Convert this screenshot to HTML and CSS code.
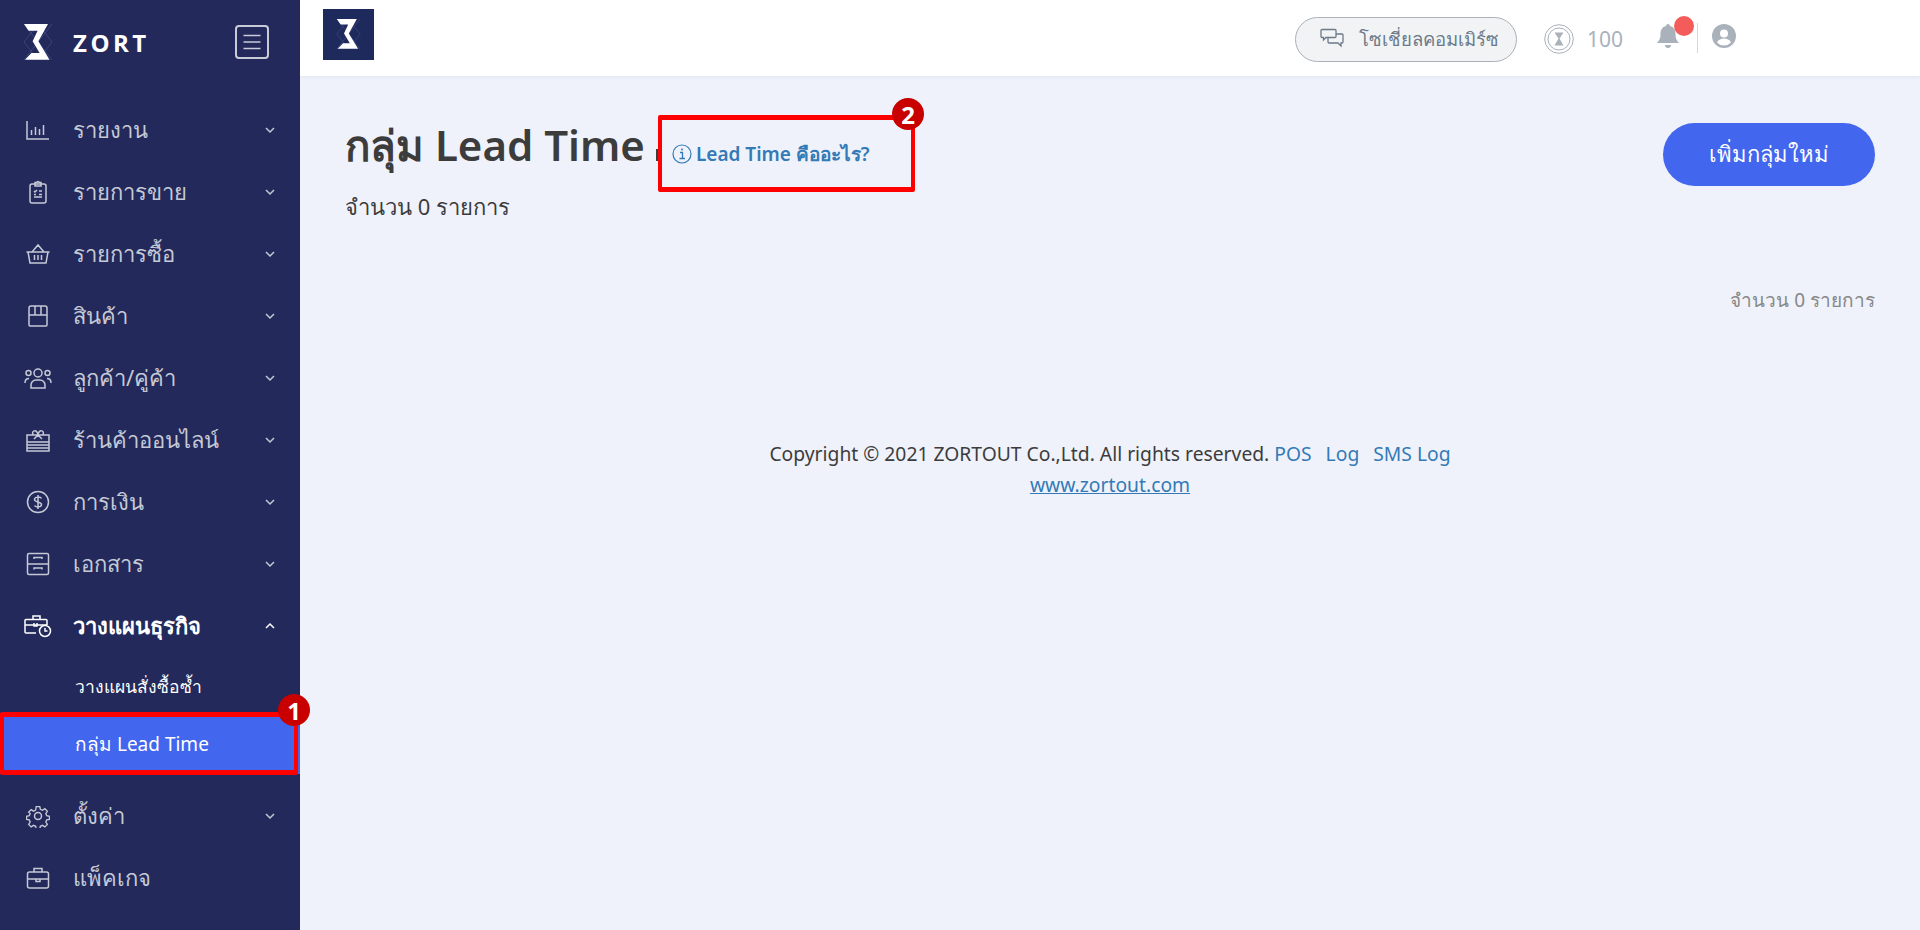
FILE: index.html
```html
<!DOCTYPE html>
<html lang="th">
<head>
<meta charset="utf-8">
<title>กลุ่ม Lead Time</title>
<link rel="stylesheet" href="styles.css">
</head>
<body>
<svg class="defs" width="0" height="0"><defs>
<symbol id="zlogo" viewBox="0 0 30 36">
<path d="M15 0 1 18l14 18M15 0l14 18-14 18M1 0l28 36M29 0 1 36" fill="none" stroke="#3f4a86" stroke-width=".8"/>
<path d="M1 0h24l-9.600 17.300L26.500 35.700H2L8.400 29h8.200L9.600 17.300 14.600 6.700h-9z" fill="#fff"/>
</symbol>
</defs></svg>
<div class="app">
<aside class="sidebar">
  <div class="brand">
    <svg class="brand-logo"><use href="#zlogo"/></svg>
    <span class="brand-name">ZORT</span>
    <span class="burger"><svg viewBox="0 0 34 34" width="34" height="34"><rect x="1" y="1" width="32" height="32" rx="3" fill="none" stroke="#c9ccd8" stroke-width="2"/><path d="M8.500 10.500h17M8.500 17h17M8.500 23.500h17" stroke="#c9ccd8" stroke-width="1.500"/></svg></span>
  </div>
  <nav class="menu">
    <a class="item"><svg class="ico" viewBox="0 0 24 24"><path d="M1 3v18h22M5.500 17v-5M9.500 17V9M13.500 17v-6M17.500 17V7"/></svg><span class="lbl">รายงาน</span><svg class="chev" viewBox="0 0 12 8"><path d="M2 2l4 4 4-4"/></svg></a>
    <a class="item"><svg class="ico" viewBox="0 0 24 24"><rect x="4" y="4" width="16" height="19" rx="2"/><path d="M9 4V2.500h2a1 1 0 0 1 2 0h2V6H9zM8 11l1 1 2-2M13 11h3M8 17h8M8 14.500h2M13 14.500h3"/></svg><span class="lbl">รายการขาย</span><svg class="chev" viewBox="0 0 12 8"><path d="M2 2l4 4 4-4"/></svg></a>
    <a class="item"><svg class="ico" viewBox="0 0 24 24"><path d="M0.500 10h23M2 10l2 11h16l2-11M6 10l6-7 6 7M8.500 13v5M12 13v5M15.500 13v5"/></svg><span class="lbl">รายการซื้อ</span><svg class="chev" viewBox="0 0 12 8"><path d="M2 2l4 4 4-4"/></svg></a>
    <a class="item"><svg class="ico" viewBox="0 0 24 24"><path d="M5 2h14a2 2 0 0 1 2 2v17a1 1 0 0 1-1 1H4a1 1 0 0 1-1-1V4a2 2 0 0 1 2-2zM3 11h18M9 2v9M15 2v9"/></svg><span class="lbl">สินค้า</span><svg class="chev" viewBox="0 0 12 8"><path d="M2 2l4 4 4-4"/></svg></a>
    <a class="item"><svg class="ico ico-w" viewBox="0 0 28 24"><circle cx="14" cy="7" r="4"/><circle cx="4.500" cy="7" r="2.500"/><circle cx="23.500" cy="7" r="2.500"/><path d="M7 22v-3a5 5 0 0 1 5-5h4a5 5 0 0 1 5 5v3zM1 17c0-3 1.500-4.500 4-4.500M27 17c0-3-1.500-4.500-4-4.500"/></svg><span class="lbl">ลูกค้า/คู่ค้า</span><svg class="chev" viewBox="0 0 12 8"><path d="M2 2l4 4 4-4"/></svg></a>
    <a class="item"><svg class="ico" viewBox="0 0 24 24"><path d="M1 7h22v16H1zM1 14h22M1 17h22M1 20h22M7 7c-2-5 4-6 5 0 1-6 7-5 5 0M8 11l4-4 4 4"/></svg><span class="lbl">ร้านค้าออนไลน์</span><svg class="chev" viewBox="0 0 12 8"><path d="M2 2l4 4 4-4"/></svg></a>
    <a class="item"><svg class="ico" viewBox="0 0 24 24"><circle cx="12" cy="12" r="10.500"/><path d="M15.500 8.500c-1-2-7-2-7 1s7 2 7 5-6 3-7 1M12 5v14"/></svg><span class="lbl">การเงิน</span><svg class="chev" viewBox="0 0 12 8"><path d="M2 2l4 4 4-4"/></svg></a>
    <a class="item"><svg class="ico" viewBox="0 0 24 24"><rect x="1.500" y="1.500" width="21" height="21" rx="1.500"/><path d="M1.500 12h21M8 7V5.500h8V7M8 17.500V16h8v1.500"/></svg><span class="lbl">เอกสาร</span><svg class="chev" viewBox="0 0 12 8"><path d="M2 2l4 4 4-4"/></svg></a>
    <a class="item item-open"><svg class="ico ico-w" viewBox="0 0 28 24"><path d="M12 19H2a1 1 0 0 1-1-1V6.500a1 1 0 0 1 1-1h20a1 1 0 0 1 1 1V11M1 11h22M9 5.500V2h7v3.500M10 9v3h3V9"/><circle cx="21" cy="17" r="5.500"/><path d="M21 14v3h2.500"/></svg><span class="lbl">วางแผนธุรกิจ</span><svg class="chev" viewBox="0 0 12 8"><path d="M2 6l4-4 4 4"/></svg></a>
    <a class="sub">วางแผนสั่งซื้อซ้ำ</a>
    <a class="sub sub-active">กลุ่ม Lead Time</a>
    <a class="item"><svg class="ico" viewBox="0 0 24 24"><circle cx="12" cy="12" r="3.500"/><path d="M10 1.500h4l.6 3 2.400 1.100 2.600-1.700 2.800 2.900-1.700 2.500 1 2.400 3 .6v3.400l-3 .6-1 2.400 1.700 2.600-2.800 2.800-2.600-1.700-2.400 1-.6 3h-4l-.6-3-2.400-1-2.600 1.700-2.800-2.800 1.700-2.600-1-2.400-3-.6v-3.400l3-.6 1-2.400L1.600 7.800l2.800-2.900L7 6.600l2.400-1.100z" transform="translate(1.200 1.200) scale(.9)"/></svg><span class="lbl">ตั้งค่า</span><svg class="chev" viewBox="0 0 12 8"><path d="M2 2l4 4 4-4"/></svg></a>
    <a class="item"><svg class="ico" viewBox="0 0 24 24"><rect x="1.500" y="6" width="21" height="16" rx="2"/><path d="M8 6V2.500h8V6M1.500 13h21M10 13v2.500h4V13"/></svg><span class="lbl">แพ็คเกจ</span></a>
  </nav>
  <span class="mark mark-menu"></span>
  <span class="badge badge-menu">1</span>
</aside>
<div class="main">
  <header class="topbar">
    <span class="top-logo"><svg class="top-logo-img"><use href="#zlogo"/></svg></span>
    <div class="top-tools">
      <a class="social"><svg class="social-ico" viewBox="0 0 24 22"><path d="M2 1.500h13a1 1 0 0 1 1 1v6a1 1 0 0 1-1 1H6l-2.500 2.500V9.500H2a1 1 0 0 1-1-1v-6a1 1 0 0 1 1-1zM16 6h6a1 1 0 0 1 1 1v7a1 1 0 0 1-1 1h-1v3l-3-3H9a1 1 0 0 1-1-1V9.500"/></svg>โซเชี่ยลคอมเมิร์ซ</a>
      <span class="coin"><svg viewBox="0 0 30 30" width="30" height="30"><circle cx="15" cy="15" r="14.300" fill="none" stroke="#aab1b9"/><circle cx="15" cy="15" r="11" fill="none" stroke="#aab1b9"/><path d="M10.500 8.500h9l-4 6 4 7h-9l4-7z" fill="#aab1b9"/></svg></span>
      <span class="credit">100</span>
      <span class="bell"><svg viewBox="0 0 22 26" width="22" height="26"><path d="M11 1a2 2 0 0 1 2 2c4 1 5.500 4 5.500 8 0 5 1.500 6.500 3.500 9H0c2-2.500 3.500-4 3.500-9 0-4 1.500-7 5.500-8a2 2 0 0 1 2-2zM8 22h6a3 3 0 0 1-6 0z" fill="#a9b2bb"/></svg><i class="dot"></i></span>
      <span class="sep"></span>
      <svg class="avatar" viewBox="0 0 24 24" width="24" height="24"><circle cx="12" cy="12" r="12" fill="#a9b2bb"/><circle cx="12" cy="9.500" r="4" fill="#fff"/><path d="M5 18.500c1.500-3 4-4 7-4s5.500 1 7 4a9.500 9.500 0 0 1-14 0z" fill="#fff"/></svg>
    </div>
  </header>
  <main class="content">
    <div class="head">
      <div class="head-left">
        <div class="title-row">
          <h1 class="title">กลุ่ม Lead Time</h1>
          <span class="stub"></span>
          <a class="help"><svg class="help-ico" viewBox="0 0 20 20" width="20" height="20"><circle cx="10" cy="10" r="9" fill="none" stroke="#337ab7" stroke-width="1.200"/><path d="M8 8.500h2.500v6M7.500 14.500h5.500" fill="none" stroke="#337ab7" stroke-width="1.300"/><circle cx="10" cy="5.500" r="1" fill="#337ab7"/></svg>Lead Time คืออะไร?</a>
        </div>
        <p class="count">จำนวน 0 รายการ</p>
      </div>
      <a class="add-btn">เพิ่มกลุ่มใหม่</a>
    </div>
    <p class="total">จำนวน 0 รายการ</p>
    <footer class="foot">
      <p>Copyright © 2021 ZORTOUT Co.,Ltd. All rights reserved. <a>POS</a><a class="gap">Log</a><a class="gap">SMS Log</a></p>
      <p><a class="site">www.zortout.com</a></p>
    </footer>
    <span class="mark mark-help"></span>
    <span class="badge badge-help">2</span>
  </main>
</div>
</div>
</body>
</html>
```

FILE: styles.css
```css
* { box-sizing: border-box; }
html, body { margin: 0; height: 100%; overflow: hidden; }
body { font-family: "Noto Sans", "Open Sans", "Liberation Sans", sans-serif; background: #eff2fa; color: #3c3c3c; }
.defs { position: absolute; }
.app { display: flex; height: 930px; }

.sidebar { position: relative; width: 300px; flex: none; background: #23295a; color: #c5c9d6; }
.brand { display: flex; align-items: center; height: 88px; padding: 0 31px 4px 23px; }
.brand-logo { width: 30px; height: 36px; }
.brand-name { margin-left: 20px; font-size: 24px; font-weight: 700; letter-spacing: 3.500px; color: #fff; font-family: "Open Sans", sans-serif; }
.burger { margin-left: auto; height: 34px; }
.menu { display: flex; flex-direction: column; padding-top: 11px; }
.item { display: flex; align-items: center; height: 62px; padding: 0 24px 0 26px; font-size: 22px; }
.ico { width: 24px; height: 24px; flex: none; fill: none; stroke: #c5c9d6; stroke-width: 1.500; }
.ico-w { width: 28px; margin-left: -2px; margin-right: -2px; }
.lbl { margin-left: 23px; flex: 1; }
.chev { width: 12px; height: 8px; fill: none; stroke: #c5c9d6; stroke-width: 1.500; }
.item-open { color: #fff; font-weight: 700; }
.item-open .ico, .item-open .chev { stroke: #fff; }
.sub { display: flex; align-items: center; height: 58px; padding: 2px 0 0 75px; font-size: 17.500px; color: #fff; font-weight: 500; }
.sub-active { background: #4366ee; height: 59px; font-size: 19px; font-weight: 400; margin-bottom: 11px; padding: 0 0 2px 75px; }

.main { flex: 1; display: flex; flex-direction: column; min-width: 0; }
.topbar { display: flex; align-items: center; height: 76px; padding: 0 0 0 23px; background: #fff; box-shadow: 0 1px 4px rgba(60, 80, 140, .08); }
.top-logo { display: flex; align-items: center; justify-content: center; width: 51px; height: 51px; margin-top: -8px; background: #1f2a5c; }
.top-logo-img { width: 25px; height: 30px; }
.top-tools { display: flex; align-items: center; margin-left: auto; padding-right: 184px; }
.social { display: flex; align-items: center; height: 45px; width: 222px; margin-top: 2px; padding-left: 24px; border: 1px solid #aab1b9; border-radius: 23px; background: #f1f3f5; color: #6c7a89; font-size: 18.500px; }
.social-ico { width: 24px; height: 22px; margin-right: 15px; fill: none; stroke: #6c7a89; stroke-width: 1.300; }
.coin { height: 30px; margin-left: 27px; margin-top: 2px; }
.credit { margin-left: 13px; margin-top: 2px; font-size: 21px; color: #a9b2bb; }
.bell { position: relative; height: 26px; margin-left: 34px; margin-bottom: 4px; }
.dot { position: absolute; left: 17px; top: -7px; width: 20px; height: 20px; border-radius: 50%; background: #f45c5c; }
.sep { width: 1px; height: 30px; margin-left: 18px; background: #d4d8dc; }
.avatar { margin-left: 14px; margin-bottom: 4px; }

.content { position: relative; flex: 1; padding: 45px 45px 0; }
.head { display: flex; justify-content: space-between; align-items: flex-start; padding-top: 0; }
.title-row { display: flex; align-items: baseline; height: 52px; }
.title { margin: 0; font-size: 42px; line-height: 48px; font-weight: 600; color: #3c3c3c; }
.stub { width: 3px; height: 12px; margin-left: 11px; background: #3c3c3c; }
.help { display: flex; align-items: center; margin-left: 13px; font-size: 19px; font-weight: 600; color: #337ab7; transform: translateY(3px); }
.help-ico { margin-right: 4px; }
.count { margin: 19px 0 0; font-size: 22px; line-height: 28px; }
.add-btn { display: flex; align-items: center; justify-content: center; width: 212px; height: 63px; margin-top: 2px; border-radius: 32px; background: #4366ee; color: #fff; font-size: 22px; font-weight: 500; }
.total { margin: 67px 0 0; text-align: right; font-size: 19px; line-height: 26px; color: #888; }
.foot { margin-top: 125px; text-align: center; font-size: 19.300px; line-height: 31px; }
.foot p { margin: 0; }
.foot a { color: #337ab7; }
.foot .gap { margin-left: 14px; }
.foot .site { text-decoration: underline; }

.mark { position: absolute; border-style: solid; border-color: #f00; border-width: 5px 4px; border-radius: 2px; }
.mark-menu { left: 0; top: 712px; width: 298px; height: 63px; }
.mark-help { left: 358px; top: 39px; width: 257px; height: 77px; }
.badge { position: absolute; display: flex; align-items: center; justify-content: center; width: 32px; height: 32px; border-radius: 50%; background: #c80000; color: #fff; font-size: 24px; font-weight: 700; }
.badge-menu { left: 278px; top: 694px; }
.badge-help { left: 592px; top: 22px; }
```
